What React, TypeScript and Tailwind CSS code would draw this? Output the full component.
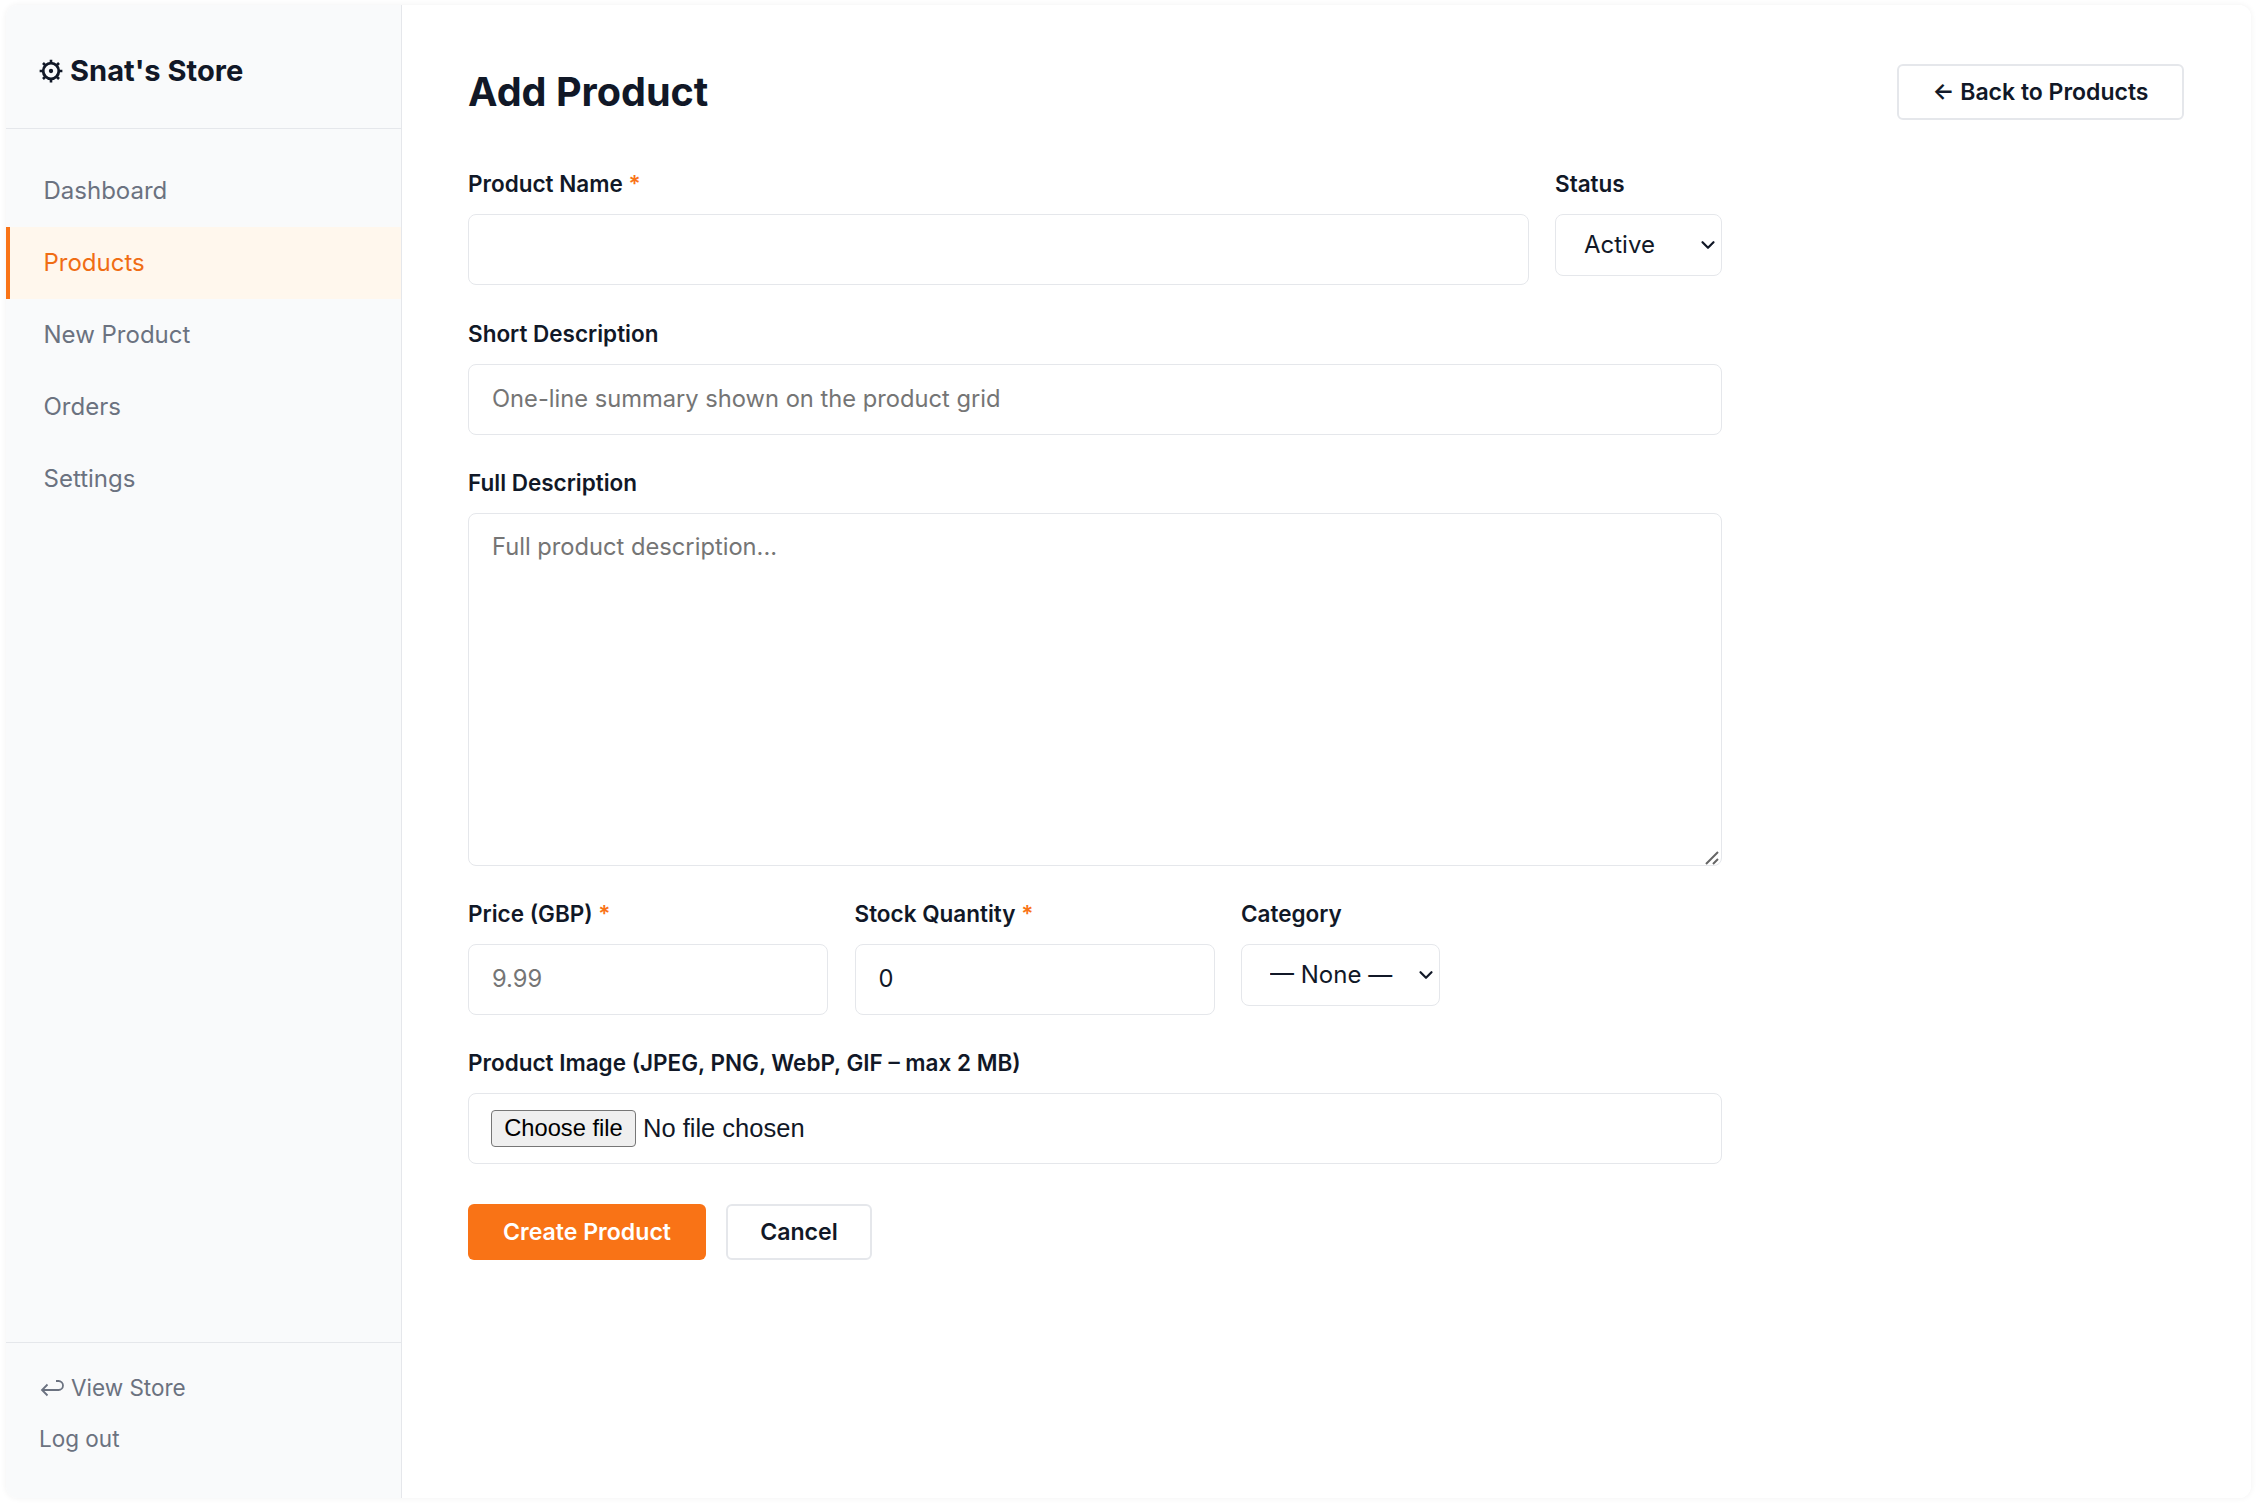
import { ChevronDown } from "lucide-react";

const navItems = ["Dashboard", "Products", "New Product", "Orders", "Settings"];
const inputClass =
  "w-full h-[71px] px-[23px] pb-[1px] rounded-[8px] border-[1.5px] border-[#e5e7eb] bg-white text-[23.7px] text-[#111827] placeholder:text-[#757575] outline-none";

function Label({ text, required }: { text: string; required?: boolean }) {
  return (
    <label className="block h-[36px] mb-[12px] text-[22.5px] leading-[36px] font-semibold text-[#111827]">
      {text}
      {required && <span className="text-[#f97316]"> *</span>}
    </label>
  );
}

function Select({ value, className }: { value: string; className: string }) {
  return (
    <div className={`relative h-[62px] rounded-[8px] border-[1.5px] border-[#e5e7eb] bg-white ${className}`}>
      <select className="w-full h-full appearance-none bg-transparent text-[24px] text-[#111827] pl-[28px] outline-none">
        <option>{value}</option>
      </select>
      <ChevronDown className="absolute right-[2px] top-[19px] w-[22px] h-[22px] text-[#111827] pointer-events-none" strokeWidth={2.4} />
    </div>
  );
}

function GearIcon() {
  return (
    <svg viewBox="0 0 24 24" className="w-[26px] h-[26px]" fill="none">
      <circle cx="12" cy="12" r="7.2" stroke="#111827" strokeWidth="2.6" />
      <circle cx="12" cy="12" r="2" fill="#111827" />
      <path
        d="M12 1.5v3M12 19.5v3M1.5 12h3M19.5 12h3M4.6 4.6l2.1 2.1M17.3 17.3l2.1 2.1M4.6 19.4l2.1-2.1M17.3 6.7l2.1-2.1"
        stroke="#111827"
        strokeWidth="2.4"
      />
    </svg>
  );
}

function ReturnIcon() {
  return (
    <svg viewBox="0 0 24 18" className="w-[24px] h-[18px]" fill="none" stroke="#6b7280" strokeWidth="1.8">
      <path d="M2 11h16.5a4 4 0 0 0 0-9H16" />
      <path d="M7.5 5.5 2 11l5.5 5.5" />
    </svg>
  );
}

export default function App() {
  return (
    <div className="w-[2256px] h-[1504px] bg-white pl-[6px] pr-[5px] pt-[5px] pb-[6px] font-['Inter',sans-serif]">
      <div className="flex h-full rounded-[12px] overflow-hidden shadow-[0_0_6px_rgba(0,0,0,0.06)]">
        <aside className="flex flex-col w-[396px] shrink-0 bg-[#f9fafb] border-r-[1.5px] border-[#e5e7eb]">
          <div className="h-[124px] pl-[32px] pt-[8px] flex items-center gap-[6px] border-b-[1.5px] border-[#e5e7eb] text-[29.1px] font-bold text-[#111827]">
            <GearIcon />
            <span>Snat's Store</span>
          </div>
          <nav className="flex-1 pt-[26px]">
            {navItems.map((item) => (
              <a
                key={item}
                className={
                  item === "Products"
                    ? "flex items-center h-[72px] pl-[33.5px] border-l-[4px] border-[#f97316] bg-[#fff7ed] text-[24px] text-[#f06d14]"
                    : "flex items-center h-[72px] pl-[37.5px] text-[24px] text-[#6b7280]"
                }
              >
                {item}
              </a>
            ))}
          </nav>
          <div className="h-[156px] pt-[27px] pl-[34px] border-t-[1.5px] border-[#e5e7eb] text-[22.5px] text-[#6b7280]">
            <div className="flex items-center gap-[7px] h-[36px]">
              <ReturnIcon />
              <span>View Store</span>
            </div>
            <div className="h-[36px] mt-[16px] -ml-[1px]">Log out</div>
          </div>
        </aside>
        <main className="flex-1 bg-white pl-[66px] pr-[67px] pt-[59px]">
          <div className="flex items-center justify-between h-[56px] mb-[46px]">
            <h1 className="pt-[2px] text-[39.6px] font-bold text-[#111827]">Add Product</h1>
            <a className="flex items-center justify-center w-[287px] h-[56px] rounded-[6px] border-[2px] border-[#e5e7eb] text-[23px] font-semibold text-[#111827]">
              ← Back to Products
            </a>
          </div>
          <form className="w-[1254px]">
            <div className="flex gap-[26px] mb-[30.5px]">
              <div className="flex-1">
                <Label text="Product Name" required />
                <input className={inputClass} />
              </div>
              <div className="w-[167px]">
                <Label text="Status" />
                <Select value="Active" className="w-[167px]" />
              </div>
            </div>
            <div className="mb-[30.5px]">
              <Label text="Short Description" />
              <input className={inputClass} placeholder="One-line summary shown on the product grid" />
            </div>
            <div className="mb-[29.5px]">
              <Label text="Full Description" />
              <div className="relative h-[353px]">
                <textarea
                  className="block w-full h-full px-[23px] py-[15px] resize-none rounded-[8px] border-[1.5px] border-[#e5e7eb] text-[23.7px] text-[#111827] placeholder:text-[#757575] outline-none"
                  placeholder="Full product description..."
                />
                <svg viewBox="0 0 14 14" className="absolute right-[3px] bottom-[1px] w-[14px] h-[14px]" stroke="#666" strokeWidth="2">
                  <path d="M1 13 13 1M8 13l5-5" />
                </svg>
              </div>
            </div>
            <div className="flex gap-[26.5px] mb-[30.5px]">
              <div className="w-[360px]">
                <Label text="Price (GBP)" required />
                <input className={inputClass} placeholder="9.99" />
              </div>
              <div className="w-[360px]">
                <Label text="Stock Quantity" required />
                <input className={inputClass} defaultValue="0" />
              </div>
              <div className="w-[199px]">
                <Label text="Category" />
                <Select value="— None —" className="w-[199px]" />
              </div>
            </div>
            <div className="mb-[40px]">
              <Label text="Product Image (JPEG, PNG, WebP, GIF – max 2 MB)" />
              <div className="flex items-center h-[71px] px-[22px] rounded-[8px] border-[1.5px] border-[#e5e7eb]">
                <button
                  type="button"
                  className="h-[37px] w-[145px] rounded-[4px] border-[1.5px] border-[#767676] bg-[#efefef] text-[23.7px] font-['Liberation_Sans',sans-serif] text-black"
                >
                  Choose file
                </button>
                <span className="ml-[7px] text-[25.5px] font-['Liberation_Sans',sans-serif] text-[#111827]">No file chosen</span>
              </div>
            </div>
            <div className="flex gap-[20px]">
              <button type="button" className="w-[238px] h-[56px] rounded-[6px] bg-[#f97316] text-[23.1px] font-semibold text-white">
                Create Product
              </button>
              <button type="button" className="w-[146px] h-[56px] rounded-[6px] border-[2px] border-[#e5e7eb] text-[23.1px] font-semibold text-[#111827]">
                Cancel
              </button>
            </div>
          </form>
        </main>
      </div>
    </div>
  );
}
